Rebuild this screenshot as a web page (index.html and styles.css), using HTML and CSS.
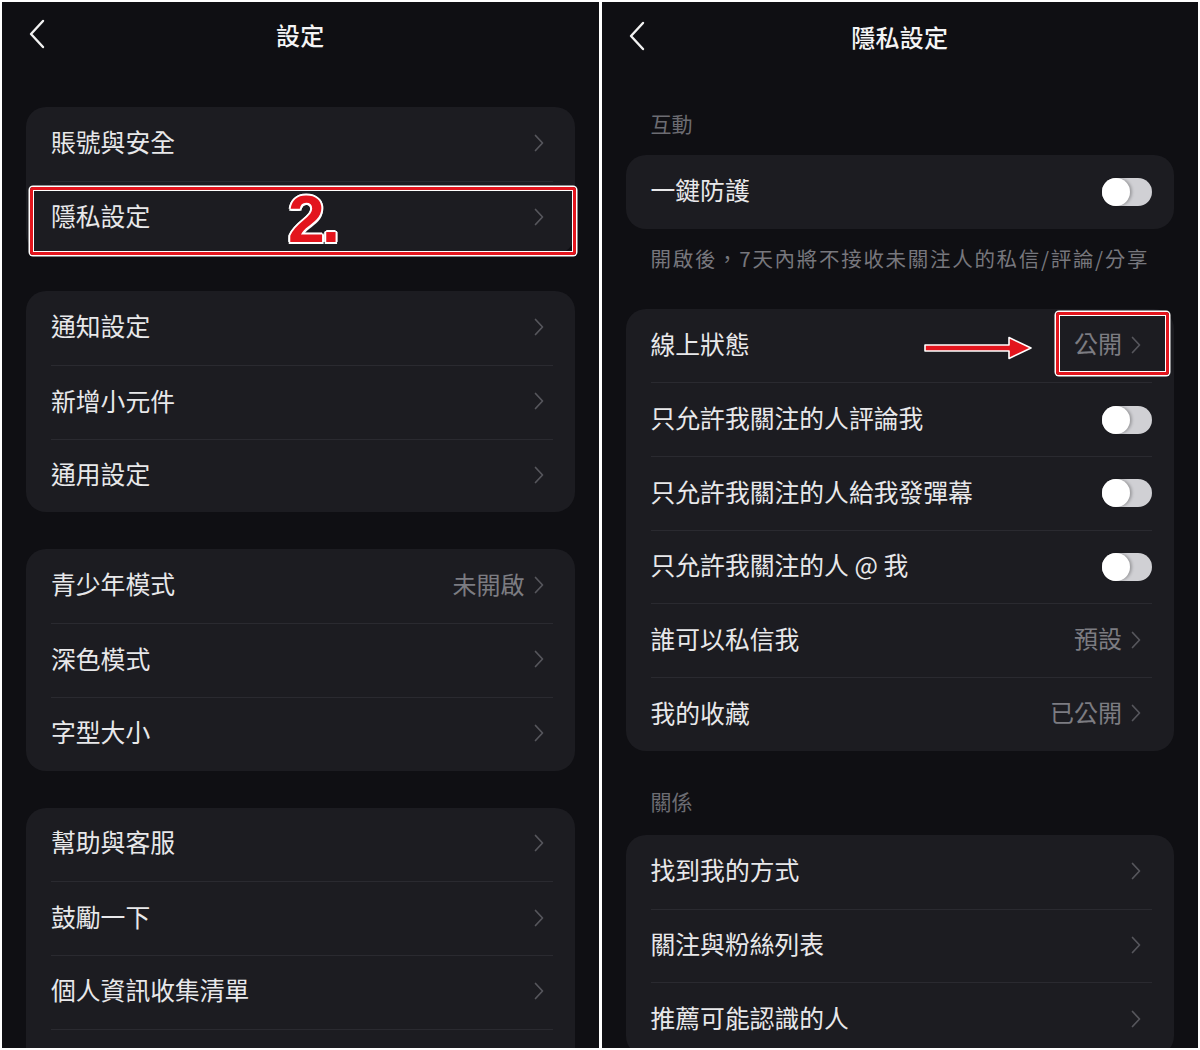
FILE: index.html
```html
<!DOCTYPE html>
<html lang="zh-Hant">
<head>
    <meta charset="UTF-8">
    <meta name="viewport" content="width=device-width, initial-scale=1.0">
    <title>設定 / 隱私設定</title>
    <link rel="stylesheet" href="styles.css">
</head>
<body>
    <div class="screens">
        <!-- Tela 1: Configurações -->
        <section class="screen">
            <header class="nav">
                <svg class="back" width="16" height="30" viewBox="0 0 16 30"><path d="M14 2 L2 15 L14 28" fill="none" stroke="#f2f2f2" stroke-width="2.4" stroke-linecap="round" stroke-linejoin="round"/></svg>
                <h1>設定</h1>
                <span></span>
            </header>

            <div class="content">
                <div class="group">
                    <div class="row"><span class="label">賬號與安全</span><span class="end"><svg class="chev" width="10" height="18" viewBox="0 0 10 18"><path d="M1.5 1.5 L8.5 9 L1.5 16.5" fill="none" stroke="#56565c" stroke-width="1.7" stroke-linecap="round" stroke-linejoin="round"/></svg></span></div>
                    <div class="row">
                        <span class="label">隱私設定</span>
                        <span class="end"><svg class="chev" width="10" height="18" viewBox="0 0 10 18"><path d="M1.5 1.5 L8.5 9 L1.5 16.5" fill="none" stroke="#56565c" stroke-width="1.7" stroke-linecap="round" stroke-linejoin="round"/></svg></span>
                        <span class="mark mark-row"></span>
                        <span class="step">2.</span>
                    </div>
                </div>

                <div class="group">
                    <div class="row"><span class="label">通知設定</span><span class="end"><svg class="chev" width="10" height="18" viewBox="0 0 10 18"><path d="M1.5 1.5 L8.5 9 L1.5 16.5" fill="none" stroke="#56565c" stroke-width="1.7" stroke-linecap="round" stroke-linejoin="round"/></svg></span></div>
                    <div class="row"><span class="label">新增小元件</span><span class="end"><svg class="chev" width="10" height="18" viewBox="0 0 10 18"><path d="M1.5 1.5 L8.5 9 L1.5 16.5" fill="none" stroke="#56565c" stroke-width="1.7" stroke-linecap="round" stroke-linejoin="round"/></svg></span></div>
                    <div class="row"><span class="label">通用設定</span><span class="end"><svg class="chev" width="10" height="18" viewBox="0 0 10 18"><path d="M1.5 1.5 L8.5 9 L1.5 16.5" fill="none" stroke="#56565c" stroke-width="1.7" stroke-linecap="round" stroke-linejoin="round"/></svg></span></div>
                </div>

                <div class="group">
                    <div class="row"><span class="label">青少年模式</span><span class="end"><span class="value">未開啟</span><svg class="chev" width="10" height="18" viewBox="0 0 10 18"><path d="M1.5 1.5 L8.5 9 L1.5 16.5" fill="none" stroke="#56565c" stroke-width="1.7" stroke-linecap="round" stroke-linejoin="round"/></svg></span></div>
                    <div class="row"><span class="label">深色模式</span><span class="end"><svg class="chev" width="10" height="18" viewBox="0 0 10 18"><path d="M1.5 1.5 L8.5 9 L1.5 16.5" fill="none" stroke="#56565c" stroke-width="1.7" stroke-linecap="round" stroke-linejoin="round"/></svg></span></div>
                    <div class="row"><span class="label">字型大小</span><span class="end"><svg class="chev" width="10" height="18" viewBox="0 0 10 18"><path d="M1.5 1.5 L8.5 9 L1.5 16.5" fill="none" stroke="#56565c" stroke-width="1.7" stroke-linecap="round" stroke-linejoin="round"/></svg></span></div>
                </div>

                <div class="group">
                    <div class="row"><span class="label">幫助與客服</span><span class="end"><svg class="chev" width="10" height="18" viewBox="0 0 10 18"><path d="M1.5 1.5 L8.5 9 L1.5 16.5" fill="none" stroke="#56565c" stroke-width="1.7" stroke-linecap="round" stroke-linejoin="round"/></svg></span></div>
                    <div class="row"><span class="label">鼓勵一下</span><span class="end"><svg class="chev" width="10" height="18" viewBox="0 0 10 18"><path d="M1.5 1.5 L8.5 9 L1.5 16.5" fill="none" stroke="#56565c" stroke-width="1.7" stroke-linecap="round" stroke-linejoin="round"/></svg></span></div>
                    <div class="row"><span class="label">個人資訊收集清單</span><span class="end"><svg class="chev" width="10" height="18" viewBox="0 0 10 18"><path d="M1.5 1.5 L8.5 9 L1.5 16.5" fill="none" stroke="#56565c" stroke-width="1.7" stroke-linecap="round" stroke-linejoin="round"/></svg></span></div>
                    <div class="row"></div>
                </div>
            </div>
        </section>

        <!-- Tela 2: Privacidade -->
        <section class="screen">
            <header class="nav nav-low">
                <svg class="back" width="16" height="30" viewBox="0 0 16 30"><path d="M14 2 L2 15 L14 28" fill="none" stroke="#f2f2f2" stroke-width="2.4" stroke-linecap="round" stroke-linejoin="round"/></svg>
                <h1>隱私設定</h1>
                <span></span>
            </header>

            <div class="content content-flat">
                <div class="section-title">互動</div>
                <div class="group">
                    <div class="row"><span class="label">一鍵防護</span><span class="toggle"></span></div>
                </div>
                <p class="note">開啟後，7天內將不接收未關注人的私信/評論/分享</p>

                <div class="group">
                    <div class="row">
                        <span class="label">線上狀態</span>
                        <span class="end end-pad"><span class="value">公開</span><svg class="chev" width="10" height="18" viewBox="0 0 10 18"><path d="M1.5 1.5 L8.5 9 L1.5 16.5" fill="none" stroke="#56565c" stroke-width="1.7" stroke-linecap="round" stroke-linejoin="round"/></svg></span>
                        <svg class="arrow" width="112" height="26" viewBox="0 0 112 26"><path d="M2 10 H86 V2.5 L108 13 L86 23.5 V16 H2 Z" fill="#e3151d" stroke="#ffffff" stroke-width="1.6" stroke-linejoin="round"/></svg>
                        <span class="mark mark-value"></span>
                    </div>
                    <div class="row"><span class="label">只允許我關注的人評論我</span><span class="toggle"></span></div>
                    <div class="row"><span class="label">只允許我關注的人給我發彈幕</span><span class="toggle"></span></div>
                    <div class="row"><span class="label">只允許我關注的人 @ 我</span><span class="toggle"></span></div>
                    <div class="row"><span class="label">誰可以私信我</span><span class="end end-pad"><span class="value">預設</span><svg class="chev" width="10" height="18" viewBox="0 0 10 18"><path d="M1.5 1.5 L8.5 9 L1.5 16.5" fill="none" stroke="#56565c" stroke-width="1.7" stroke-linecap="round" stroke-linejoin="round"/></svg></span></div>
                    <div class="row"><span class="label">我的收藏</span><span class="end end-pad"><span class="value">已公開</span><svg class="chev" width="10" height="18" viewBox="0 0 10 18"><path d="M1.5 1.5 L8.5 9 L1.5 16.5" fill="none" stroke="#56565c" stroke-width="1.7" stroke-linecap="round" stroke-linejoin="round"/></svg></span></div>
                </div>

                <div class="section-title section-gap">關係</div>
                <div class="group">
                    <div class="row"><span class="label">找到我的方式</span><span class="end end-pad"><svg class="chev" width="10" height="18" viewBox="0 0 10 18"><path d="M1.5 1.5 L8.5 9 L1.5 16.5" fill="none" stroke="#56565c" stroke-width="1.7" stroke-linecap="round" stroke-linejoin="round"/></svg></span></div>
                    <div class="row"><span class="label">關注與粉絲列表</span><span class="end end-pad"><svg class="chev" width="10" height="18" viewBox="0 0 10 18"><path d="M1.5 1.5 L8.5 9 L1.5 16.5" fill="none" stroke="#56565c" stroke-width="1.7" stroke-linecap="round" stroke-linejoin="round"/></svg></span></div>
                    <div class="row"><span class="label">推薦可能認識的人</span><span class="end end-pad"><svg class="chev" width="10" height="18" viewBox="0 0 10 18"><path d="M1.5 1.5 L8.5 9 L1.5 16.5" fill="none" stroke="#56565c" stroke-width="1.7" stroke-linecap="round" stroke-linejoin="round"/></svg></span></div>
                </div>
            </div>
        </section>
    </div>
</body>
</html>
```

FILE: styles.css
```css
/* Estilos Gerais */
body {
    margin: 0;
    padding: 0;
    background-color: #ffffff;
    font-family: 'Noto Sans CJK TC', 'Noto Sans', sans-serif;
    color: #e8e8ea;
}

.screens {
    display: flex;
    gap: 3px;
    padding: 2px;
    height: 1046px;
}

.screen {
    flex: 1;
    background-color: #0f0f13;
    overflow: hidden;
}

/* Barra superior */
.nav {
    display: grid;
    grid-template-columns: 1fr auto 1fr;
    align-items: center;
    height: 70px;
    padding-bottom: 6px;
    box-sizing: border-box;
}

.nav-low {
    padding-bottom: 2px;
}

.back {
    margin-left: 27px;
    display: block;
}

h1 {
    margin: 0;
    font-size: 24px;
    font-weight: 500;
    color: #f4f4f5;
    letter-spacing: 0.3px;
}

/* Conteúdo */
.content {
    display: flex;
    flex-direction: column;
    gap: 37px;
    padding: 35px 24px 0 24px;
}

.content-flat {
    gap: 0;
    padding-top: 0;
}

.group {
    background-color: #1c1c21;
    border-radius: 20px;
}

.row {
    position: relative;
    display: flex;
    align-items: center;
    justify-content: space-between;
    height: 73.7px;
    margin: 0 22px 0 25px;
    box-sizing: border-box;
}

.row + .row {
    border-top: 1px solid #2a2a30;
}

.label {
    padding-bottom: 5px;
    font-size: 24.8px;
    line-height: 1;
    color: #e8e8ea;
    white-space: nowrap;
}

.end {
    display: flex;
    align-items: center;
    gap: 9px;
    margin-right: 9px;
    padding-bottom: 2px;
}

.end-pad {
    margin-right: 11px;
}

.value {
    padding-bottom: 3px;
    font-size: 24px;
    line-height: 1;
    color: #7c7c82;
}

.chev {
    display: block;
}

/* Interruptor */
.toggle {
    position: relative;
    width: 50px;
    height: 28px;
    border-radius: 14px;
    background-color: #d0d0d4;
}

.toggle::before {
    content: '';
    position: absolute;
    left: 0;
    top: 0;
    width: 28px;
    height: 28px;
    border-radius: 50%;
    background-color: #ffffff;
    box-shadow: 2px 0 3px rgba(0, 0, 0, 0.25);
}

.section-title {
    padding: 36px 25px 17px 25px;
    font-size: 21px;
    line-height: 30px;
    color: #6c6c72;
}

.section-gap {
    padding-top: 35px;
    padding-bottom: 19px;
}

.note {
    margin: 0;
    padding: 16px 25px 38px 25px;
    font-size: 20.5px;
    line-height: 26px;
    letter-spacing: 1.7px;
    color: #77777d;
    white-space: nowrap;
}

/* Marcações em vermelho */
.mark {
    position: absolute;
    border: 3px solid #e3151d;
    border-radius: 3px;
    box-shadow: 0 0 0 1.5px #ffffff, inset 0 0 0 1px #ffffff;
}

.mark-row {
    top: 5px;
    left: -21px;
    right: -23px;
    bottom: -1px;
}

.mark-value {
    top: 3px;
    left: 405px;
    right: -17px;
    bottom: 7px;
}

.step {
    position: absolute;
    left: 237px;
    top: 4px;
    font-family: 'Liberation Sans', Arial, sans-serif;
    font-size: 66px;
    font-weight: 700;
    line-height: 66px;
    letter-spacing: -3px;
    color: #e3151d;
    text-shadow: 2px 0 0 #fff, -2px 0 0 #fff, 0 2px 0 #fff, 0 -2px 0 #fff,
                 1.5px 1.5px 0 #fff, -1.5px 1.5px 0 #fff, 1.5px -1.5px 0 #fff, -1.5px -1.5px 0 #fff;
}

.arrow {
    position: absolute;
    left: 272px;
    top: 26px;
}
```
